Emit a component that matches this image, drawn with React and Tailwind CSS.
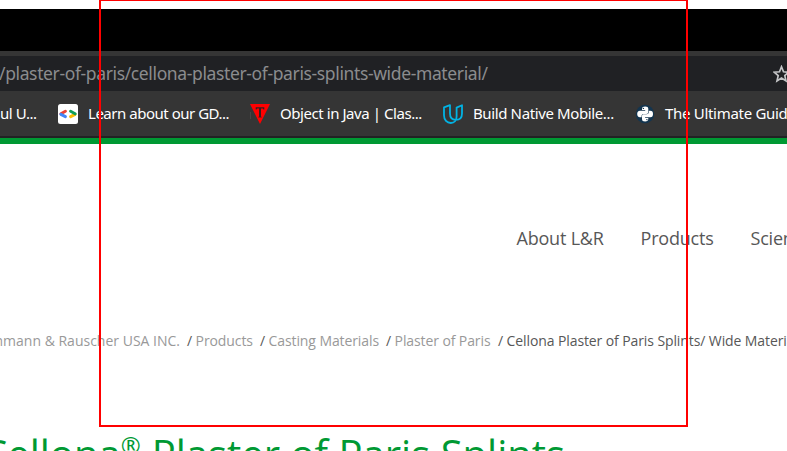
import React from "react";

function GdgIcon() {
  return (
    <svg width="20" height="20" viewBox="0 0 20 20" className="block">
      <rect width="20" height="20" rx="2.5" fill="#fff" />
      <g fill="none" strokeWidth="3" strokeLinecap="round">
        <path d="M7.4 7.3L2.9 9.7" stroke="#ea4335" />
        <path d="M2.9 10.3L7.4 12.6" stroke="#4285f4" />
        <path d="M12.6 12.6L17.1 10.3" stroke="#fbbc04" />
        <path d="M12.6 7.3L17.1 9.7" stroke="#0f9d58" />
      </g>
    </svg>
  );
}

function TriangleIcon() {
  return (
    <svg width="20" height="20" viewBox="0 0 20 20" className="block">
      <path d="M0 0H20L10 20Z" fill="#f00" />
      <path d="M5.7 3.2H14.3V5.6H13.5L12.8 4.6H11V12.3L11.8 13.4H8.2L9 12.3V4.6H7.2L6.5 5.6H5.7Z" fill="#35201f" />
      <path d="M.3 8V15" stroke="#555" strokeWidth=".7" />
    </svg>
  );
}

function UdacityIcon() {
  return (
    <svg width="20" height="20" viewBox="0 0 20 20" className="block" fill="none" stroke="#02b3e4" strokeWidth="1.8" strokeLinejoin="round">
      <path d="M7 1.2L1 3.4V11.3C1 16 4 19 7.8 19C11.3 19 13.6 16.5 13.6 12.6V3.6L19 1.2V9.4C19 14 16 15.8 12.8 15.8C9.3 15.8 7 13.3 7 9.2Z" />
    </svg>
  );
}

function PythonIcon() {
  return (
    <svg width="20" height="20" viewBox="0 0 20 20" className="block">
      <circle cx="10" cy="10" r="9.2" fill="#14354f" />
      <g fill="#fff">
        <path d="M7 5.2C7 3.2 8 2.5 10.2 2.5S13.3 3.3 13.3 5V8C13.3 9.3 12.5 9.9 11.3 9.9H8.8C7.2 9.9 6.6 10.7 6.6 12V13.2H5C3 13.2 2.2 12 2.2 10S3 6.7 5 6.7H10.2V6H7Z" />
        <path d="M13.3 14.8C13.3 16.8 12.3 17.5 10.1 17.5S7 16.7 7 15V12C7 10.8 7.8 10.2 9 10.2H11.5C13.1 10.2 13.8 9.4 13.8 8.1V6.8H15.3C17.2 6.8 18 8 18 10S17.2 13.3 15.3 13.3H10.1V14H13.3Z" />
      </g>
      <circle cx="8.4" cy="4.4" r=".7" fill="#14354f" />
      <circle cx="11.9" cy="15.6" r=".7" fill="#14354f" />
    </svg>
  );
}

function Bookmark({ icon, label, className, textClass }) {
  return (
    <div className={`flex shrink-0 items-center ${className}`}>
      {icon}
      <span className={`ml-[10px] text-[15px] ${textClass}`}>{label}</span>
    </div>
  );
}

const crumbs = [
  ["Products", "w-[73px]"],
  ["Casting Materials", "w-[126px]"],
  ["Plaster of Paris", "w-[112px]"],
];

export default function App() {
  return (
    <div className="relative h-[451px] w-[787px] overflow-hidden whitespace-nowrap bg-white font-['Open_Sans','Noto_Sans',sans-serif]">
      <div className="mt-[9px] h-[42px] bg-black" />
      <div className="h-[87px] border-b-2 border-[#222224] bg-[#353535] pt-[5px] font-['Noto_Sans','Open_Sans',sans-serif]">
        <div className="flex h-[35px] items-center justify-between bg-[#202124]">
          <span className="ml-[-1px] text-[17.5px] tracking-[-0.37px] text-[#8b8c8e]">
            /plaster-of-paris/cellona-plaster-of-paris-splints-wide-material/
          </span>
          <svg width="17" height="18" viewBox="0 0 17 18" className="mr-[-3px] block shrink-0">
            <path d="M8.5 1.8L10.5 6.8L15.8 7.2L11.8 10.6L13 15.9L8.5 13.1L4 15.9L5.2 10.6L1.2 7.2L6.5 6.8Z" fill="none" stroke="#c4c5c7" strokeWidth="1.7" />
          </svg>
        </div>
        <div className="flex h-[45px] items-center text-white">
          <span className="w-[58px] shrink-0 text-[15px] tracking-[-0.45px]">ul U...</span>
          <Bookmark className="w-[192px]" icon={<GdgIcon />} label="Learn about our GD..." textClass="tracking-[-0.48px]" />
          <Bookmark className="w-[193px]" icon={<TriangleIcon />} label="Object in Java | Clas..." textClass="tracking-[-0.44px]" />
          <Bookmark className="w-[192px]" icon={<UdacityIcon />} label="Build Native Mobile..." textClass="tracking-[-0.38px]" />
          <Bookmark className="w-[192px]" icon={<PythonIcon />} label="The Ultimate Guide" textClass="tracking-[-0.3px]" />
        </div>
      </div>
      <div className="h-[6px] bg-[#009933]" />
      <nav className="mt-[82px] flex h-6 items-center pl-[516.5px] text-[18px] leading-6 tracking-[-0.2px] text-[#575757]">
        <span className="w-[124px] shrink-0">About L&amp;R</span>
        <span className="w-[110px] shrink-0">Products</span>
        <span className="shrink-0">Science</span>
      </nav>
      <div className="mt-[81px] flex h-5 text-[14px] leading-5 tracking-[-0.1px] text-[#575757]">
        <span className="flex w-[187px] shrink-0 justify-end pr-[7px] tracking-normal text-[#999]">Lohmann &amp; Rauscher USA INC.</span>
        {crumbs.map(([name, width]) => (
          <span key={name} className={`shrink-0 ${width}`}>
            / <span className="text-[#999]">{name}</span>
          </span>
        ))}
        <span className="shrink-0">/ Cellona Plaster of Paris Splints/ Wide Material</span>
      </div>
      <h1 className="ml-[-18px] mt-[75px] flex h-[56px] text-[40px] leading-[56px] text-[#009933]">
        <span>Cellona</span>
        <span className="relative top-[-9px] text-[24px]">®</span>
        <span className="ml-[11px]">Plaster of Paris Splints</span>
      </h1>
      <div className="absolute left-[99px] top-[-1px] h-[428px] w-[589px] border-2 border-[#f00]" />
    </div>
  );
}
